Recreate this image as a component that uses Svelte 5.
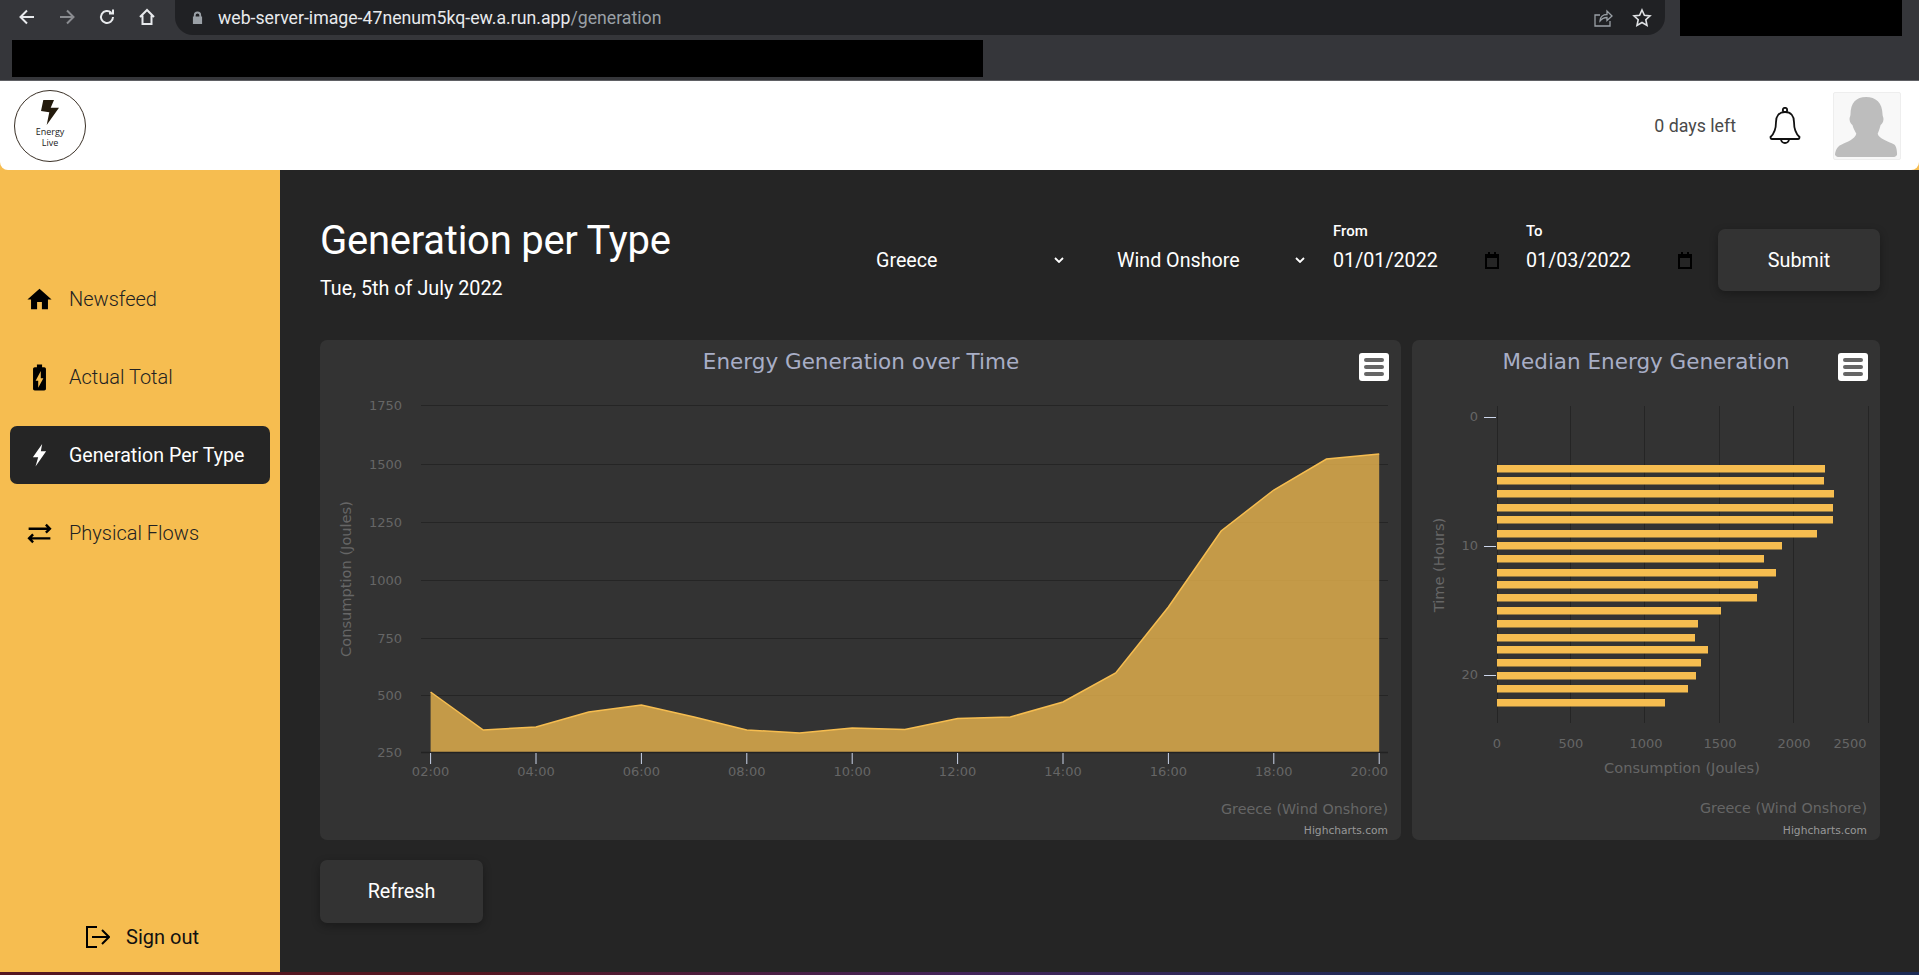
<script lang="ts">
  // pixel positions inside each chart's svg, read from the chart itself
  const lineLeft = 110.6; // 02:00 in card coords
  const hourStep = 52.7;
  const areaY = [352, 390, 387, 372, 365, 377, 390, 393, 388, 389.5, 378.5, 377, 362, 333, 267, 191, 150, 119, 114];
  const base = 412;

  const areaPoints = areaY.map((y, i) => `${lineLeft + i * hourStep},${y}`).join(" ");
  const areaFill = `${lineLeft},${base} ${areaPoints} ${lineLeft + 18 * hourStep},${base}`;

  const yTicks = [
    { label: "1750", y: 65 },
    { label: "1500", y: 124 },
    { label: "1250", y: 182 },
    { label: "1000", y: 240 },
    { label: "750", y: 298 },
    { label: "500", y: 355 },
    { label: "250", y: 412 }
  ];
  const xTicks = ["02:00", "04:00", "06:00", "08:00", "10:00", "12:00", "14:00", "16:00", "18:00", "20:00"];

  const barTops = [125, 137, 150, 164, 176, 190, 202, 215, 229, 241, 254, 267, 280, 294, 306, 319, 332, 345, 359];
  const barEnds = [413, 412, 422, 421, 421, 405, 370, 352, 364, 346, 345, 309, 286, 283, 296, 289, 284, 276, 253];
  const barGrid = [85, 158, 232, 307, 381, 456];
  const barLabels = [
    { label: "0", x: 85 },
    { label: "500", x: 159 },
    { label: "1000", x: 234 },
    { label: "1500", x: 308 },
    { label: "2000", x: 382 },
    { label: "2500", x: 438 }
  ];
  const rowTicks = [
    { label: "0", y: 77 },
    { label: "10", y: 206 },
    { label: "20", y: 335 }
  ];
  const navItems = [
    { label: "Newsfeed", icon: "M10 20v-6h4v6h5v-8h3L12 3 2 12h3v8z", size: 29 },
    { label: "Actual Total", icon: "M15.67 4H14V2h-4v2H8.33C7.6 4 7 4.6 7 5.33v15.33C7 21.4 7.6 22 8.33 22h7.33c.74 0 1.34-.6 1.34-1.33V5.33C17 4.6 16.4 4 15.67 4zM11 20v-5.5H9L13 7v5.5h2L11 20z", size: 31 },
    { label: "Generation Per Type", icon: "M14.2 2.500L6.500 13.400h4.400L8.700 21l8.800-12.600h-4.400z", size: 29, active: true },
    { label: "Physical Flows", icon: "M7.41 13.41L6 12l-4 4 4 4 1.41-1.41L5.83 17H21v-2H5.83zM16.59 10.59L18 12l4-4-4-4-1.41 1.41L18.17 7H3v2h15.17z", size: 29 }
  ];
</script>

<div class="app">
  <div class="chrome">
    <div class="chrome-top">
      <div class="nav-buttons">
        <svg viewBox="0 0 20 20"><path d="M17 10H4M10 3.500L3.500 10l6.500 6.500" /></svg>
        <svg class="dim" viewBox="0 0 20 20"><path d="M3 10h13M10 3.500l6.500 6.500-6.500 6.500" /></svg>
        <svg viewBox="0 0 20 20"><path d="M16 10a6 6 0 1 1-1.800-4.300M16 2.500v4h-4" /></svg>
        <svg viewBox="0 0 20 20"><path d="M3 10l7-7 7 7M5.500 8.500V17h9V8.500" /></svg>
      </div>
      <div class="omnibox">
        <svg class="lock" viewBox="0 0 12 14"><path d="M2 6V4.500a4 4 0 0 1 8 0V6h1v8H1V6zm2 0h4V4.500a2 2 0 0 0-4 0z" /></svg>
        <span class="url">web-server-image-47nenum5kq-ew.a.run.app<span class="url-path">/generation</span></span>
        <svg class="omni-icon" viewBox="0 0 20 20"><path d="M17 13v5H2V7h5M7 13c0-4 3-6.500 7-6.500V3l5 5-5 4.500V9.500c-3 0-5 1-7 3.500z" /></svg>
        <svg class="omni-icon star" viewBox="0 0 20 20"><path d="M10 2l2.400 5.300 5.600.6-4.200 3.800 1.200 5.700-5-2.900-5 2.900 1.200-5.700L2 7.900l5.600-.6z" /></svg>
      </div>
      <div class="redact-top"></div>
    </div>
    <div class="redact-bar"></div>
  </div>

  <header class="topbar">
    <svg class="logo" viewBox="0 0 72 72">
      <circle cx="36" cy="36" r="35.500" fill="#fff" stroke="#3a3026" />
      <path d="M29.300 10H40l-3.300 7.700H45L32.700 35l2.600-12.700-8.300-1.300z" fill="#231a0c" />
      <text x="36" y="44.500" text-anchor="middle">Energy</text>
      <text x="36" y="56" text-anchor="middle">Live</text>
    </svg>
    <span class="days">0 days left</span>
    <svg class="bell" viewBox="0 0 32 38">
      <path d="M16 5c-6 0-9 4-9 10 0 7-1 11-5.500 15 0 1 .5 2 1.500 2h26c1 0 1.500-1 1.500-2C26 26 25 22 25 15c0-6-3-10-9-10z" />
      <circle cx="16" cy="3" r="2.200" />
      <path d="M12 32a4 4 0 0 0 8 0" />
    </svg>
    <div class="avatar">
      <svg viewBox="0 0 68 68">
        <path d="M33 4c10 0 17 6 17 18 0 2 1 3 1 5 0 3-2 5-3 6-1 4-2 7-3 9 1 5 11 8 17 11 2 1 3 6 3 10 0 1-1 2-3 3H4c-2-1-3-2-3-3 1-6 4-9 7-10 5-2 14-6 15-11-1-2-3-5-4-9-1-1-3-3-3-6 0-2 1-3 1-5C17 10 23 4 33 4z" fill="#bdbdbd" />
      </svg>
    </div>
  </header>

  <div class="body">
    <aside class="sidebar">
      <nav>
        {#each navItems as item}
          <div class="nav-item" class:active={item.active}>
            <span class="nav-icon">
              <svg viewBox="0 0 24 24" width={item.size} height={item.size}><path d={item.icon} /></svg>
            </span>
            {item.label}
          </div>
        {/each}
      </nav>
      <div class="sign-out">
        <svg viewBox="0 0 24 22"><path d="M11 1H1v20h10M6 11h17M16 4l7 7-7 7" /></svg>
        Sign out
      </div>
    </aside>

    <main class="content">
      <section class="head">
        <div class="heading">
          <h1>Generation per Type</h1>
          <p>Tue, 5th of July 2022</p>
        </div>
        <div class="filters">
          <div class="select first">
            Greece
            <svg viewBox="0 0 10 6"><path d="M1 1l4 4 4-4" /></svg>
          </div>
          <div class="select">
            Wind Onshore
            <svg viewBox="0 0 10 6"><path d="M1 1l4 4 4-4" /></svg>
          </div>
          <div class="date from">
            <span class="date-label">From</span>
            <div class="date-value">
              01/01/2022
              <svg viewBox="0 0 14 17"><path d="M0 2h3V0h2v2h4V0h2v2h3v15H0zm2 4v9h10V6z" /></svg>
            </div>
          </div>
          <div class="date">
            <span class="date-label">To</span>
            <div class="date-value">
              01/03/2022
              <svg viewBox="0 0 14 17"><path d="M0 2h3V0h2v2h4V0h2v2h3v15H0zm2 4v9h10V6z" /></svg>
            </div>
          </div>
          <button class="action submit">Submit</button>
        </div>
      </section>

      <section class="charts">
        <div class="card">
          <svg class="chart" viewBox="0 0 1081 500" width="1081" height="500">
            <text class="title" x="541" y="29" text-anchor="middle">Energy Generation over Time</text>
            {#each yTicks as tick}
              <line class="grid" x1="101" x2="1068" y1={tick.y + 0.5} y2={tick.y + 0.5} />
              <text class="axis" x="82" y={tick.y + 5} text-anchor="end">{tick.label}</text>
            {/each}
            <polygon points={areaFill} fill="#f6bd50" fill-opacity="0.75" />
            <polyline points={areaPoints} fill="none" stroke="#f6bd50" stroke-width="1.500" />
            <line class="base" x1="101" x2="1068" y1="412.500" y2="412.500" />
            {#each xTicks as label, i}
              <line class="tick" x1={lineLeft + i * 105.4} x2={lineLeft + i * 105.4} y1="413" y2="424" />
              {#if i === xTicks.length - 1}
                <text class="axis" x="1068" y="436" text-anchor="end">{label}</text>
              {:else}
                <text class="axis" x={lineLeft + i * 105.4} y="436" text-anchor="middle">{label}</text>
              {/if}
            {/each}
            <text class="axis-title" transform="translate(31 239) rotate(-90)" text-anchor="middle">Consumption (Joules)</text>
            <text class="sub" x="1068" y="474" text-anchor="end">Greece (Wind Onshore)</text>
            <text class="credit" x="1068" y="494" text-anchor="end">Highcharts.com</text>
          </svg>
          <div class="menu"><span></span><span></span><span></span></div>
        </div>

        <div class="card">
          <svg class="chart" viewBox="0 0 468 500" width="468" height="500">
            <text class="title" x="234" y="29" text-anchor="middle">Median Energy Generation</text>
            {#each barGrid as x}
              <line class="grid" x1={x + 0.5} x2={x + 0.5} y1="66" y2="383" />
            {/each}
            {#each barTops as top, i}
              <rect x="85" y={top} width={barEnds[i] - 85} height="7.500" fill="#f6bd50" />
            {/each}
            {#each rowTicks as tick}
              <line class="tick" x1="72" x2="84" y1={tick.y + 0.5} y2={tick.y + 0.5} />
              <text class="axis" x="66" y={tick.y + 4} text-anchor="end">{tick.label}</text>
            {/each}
            {#each barLabels as tick}
              <text class="axis" x={tick.x} y="408" text-anchor="middle">{tick.label}</text>
            {/each}
            <text class="axis-title" x="270" y="433" text-anchor="middle">Consumption (Joules)</text>
            <text class="axis-title" transform="translate(32 225) rotate(-90)" text-anchor="middle">Time (Hours)</text>
            <text class="sub" x="455" y="473" text-anchor="end">Greece (Wind Onshore)</text>
            <text class="credit" x="455" y="494" text-anchor="end">Highcharts.com</text>
          </svg>
          <div class="menu"><span></span><span></span><span></span></div>
        </div>
      </section>

      <button class="action refresh">Refresh</button>
    </main>
  </div>

  <div class="stripe"></div>
</div>

<style>
  :global(body) {
    background: #252525;
  }

  .app {
    display: flex;
    flex-direction: column;
    height: 975px;
    overflow: hidden;
    background: #f6bd50;
    font-family: Roboto, sans-serif;
  }

  .chrome {
    height: 81px;
    box-sizing: border-box;
    background: #35363a;
    border-bottom: 1px solid #5f6064;
  }

  .chrome-top {
    display: flex;
    height: 36px;
  }

  .nav-buttons {
    display: flex;
    width: 160px;
    padding-left: 7px;
    margin-right: 8px;
  }

  .nav-buttons svg {
    width: 20px;
    height: 20px;
    margin: 7px 10px 0;
    fill: none;
    stroke: #e8eaed;
    stroke-width: 2;
  }

  .nav-buttons svg.dim {
    stroke: #8a8c90;
  }

  .omnibox {
    display: flex;
    align-items: center;
    width: 1490px;
    height: 35px;
    box-sizing: border-box;
    padding: 0 13px 0 17px;
    border-radius: 0 0 18px 18px;
    background: #202124;
  }

  .lock {
    width: 11px;
    height: 13px;
    fill: #9aa0a6;
    margin-right: 15px;
  }

  .url {
    color: #e8eaed;
    font-size: 17.700px;
    flex: 1;
  }

  .url-path {
    color: #9aa0a6;
  }

  .omni-icon {
    width: 20px;
    height: 20px;
    fill: none;
    stroke: #9aa0a6;
    stroke-width: 1.300;
    margin-left: 19px;
  }

  .omni-icon.star {
    stroke: #e0e2e5;
    stroke-width: 1.600;
  }

  .redact-top {
    width: 222px;
    margin-left: 15px;
    background: #000;
  }

  .redact-bar {
    width: 971px;
    height: 37px;
    margin: 4px 0 0 12px;
    background: #000;
  }

  .topbar {
    display: flex;
    align-items: center;
    height: 89px;
    padding: 0 18px 0 14px;
    background: #fff;
    border-radius: 0 0 8px 8px;
  }

  .logo {
    width: 72px;
    height: 72px;
    margin-right: auto;
  }

  .logo text {
    font-family: "Open Sans", sans-serif;
    font-size: 9px;
    font-weight: 500;
    fill: #222;
  }

  .days {
    color: #4a4a4a;
    font-size: 17.800px;
  }

  .bell {
    width: 32px;
    height: 38px;
    margin: 0 32px 0 33px;
    fill: none;
    stroke: #111;
    stroke-width: 1.800;
  }

  .avatar {
    width: 68px;
    height: 68px;
    box-sizing: border-box;
    background: #f8f8f8;
    border: 1px solid #eee;
    border-radius: 2px;
  }

  .avatar svg {
    display: block;
    width: 66px;
    height: 66px;
  }

  .body {
    flex: 1;
    display: flex;
    min-height: 0;
  }

  .sidebar {
    display: flex;
    flex-direction: column;
    width: 280px;
    flex-shrink: 0;
    background: #f6bd50;
  }

  nav {
    display: flex;
    flex-direction: column;
    gap: 20px;
    padding: 100px 10px 0;
  }

  .nav-item {
    display: flex;
    align-items: center;
    height: 58px;
    padding-left: 17px;
    border-radius: 7px;
    color: #222;
    font-size: 20px;
    font-weight: 300;
  }

  .nav-item.active {
    background: #252525;
    color: #fff;
    font-size: 19.600px;
    font-weight: 400;
  }

  .nav-icon {
    display: flex;
    justify-content: center;
    width: 24px;
    margin-right: 18px;
  }

  .nav-icon svg {
    flex-shrink: 0;
    fill: #000;
  }

  .active .nav-icon svg {
    fill: #fff;
  }

  .sign-out {
    display: flex;
    align-items: center;
    justify-content: center;
    gap: 16px;
    margin-top: auto;
    padding: 0 0 23px 5px;
    color: #111;
    font-size: 20px;
  }

  .sign-out svg {
    width: 24px;
    height: 22px;
    fill: none;
    stroke: #000;
    stroke-width: 2;
  }

  .content {
    flex: 1;
    padding: 0 39px 0 40px;
    background: #252525;
    color: #fff;
  }

  .head {
    display: flex;
    justify-content: space-between;
    height: 170px;
  }

  .heading {
    padding-top: 47px;
  }

  h1 {
    margin: 0;
    font-size: 40px;
    line-height: 48px;
    font-weight: 400;
    letter-spacing: -0.25px;
  }

  .heading p {
    margin: 12px 0 0;
    font-size: 19.750px;
    line-height: 24px;
  }

  .filters {
    display: flex;
    align-items: flex-start;
    padding-top: 59px;
    font-size: 19.700px;
  }

  .select {
    display: flex;
    align-items: center;
    justify-content: space-between;
    width: 216px;
    height: 62px;
    box-sizing: border-box;
    padding-right: 28px;
  }

  .select.first {
    margin-right: 25px;
  }

  .select svg {
    width: 10px;
    height: 6px;
    fill: none;
    stroke: #fff;
    stroke-width: 1.800;
  }

  .date {
    width: 192px;
    margin-top: -6px;
  }

  .date.from {
    width: 193px;
  }

  .date-label {
    display: block;
    height: 16px;
    font-size: 15px;
    line-height: 16px;
    font-weight: 500;
  }

  .date-value {
    display: flex;
    align-items: center;
    justify-content: space-between;
    height: 42px;
    padding-right: 26px;
  }

  .from .date-value {
    padding-right: 27px;
  }

  .date-value svg {
    width: 14px;
    height: 17px;
    fill: #000;
  }

  .action {
    border: 0;
    border-radius: 7px;
    background: #333;
    color: #fff;
    font-family: inherit;
    font-size: 19.800px;
    box-shadow: 0 3px 8px rgba(0, 0, 0, 0.3);
  }

  .submit {
    width: 162px;
    height: 62px;
  }

  .refresh {
    width: 163px;
    height: 63px;
    margin-top: 20px;
  }

  .charts {
    display: grid;
    grid-template-columns: 1081fr 468fr;
    gap: 11px;
  }

  .card {
    position: relative;
    height: 500px;
    border-radius: 7px;
    background: #333;
  }

  .chart {
    display: block;
    font-family: "DejaVu Sans", sans-serif;
  }

  .title {
    font-size: 21.500px;
    fill: #a8aec6;
  }

  .axis {
    font-size: 13px;
    fill: #666;
  }

  .axis-title {
    font-size: 14.600px;
    fill: #666;
  }

  .sub {
    font-size: 14.300px;
    fill: #666;
  }

  .credit {
    font-size: 10.700px;
    fill: #999;
  }

  .grid {
    stroke: #252525;
    stroke-width: 1;
  }

  .base {
    stroke: #222;
    stroke-width: 1.500;
  }

  .tick {
    stroke: #ccd6eb;
    stroke-width: 1;
  }

  .menu {
    position: absolute;
    top: 13px;
    right: 12px;
    display: flex;
    flex-direction: column;
    justify-content: center;
    gap: 3px;
    width: 30px;
    height: 28px;
    box-sizing: border-box;
    padding: 0 5px;
    border-radius: 3px;
    background: #fff;
  }

  .menu span {
    height: 4px;
    border-radius: 2px;
    background: #666;
  }

  .stripe {
    height: 3px;
    background: linear-gradient(90deg, #541722 0%, #541722 25%, #43245a 50%, #1c2b55 75%, #1c2b55 100%);
  }
</style>
